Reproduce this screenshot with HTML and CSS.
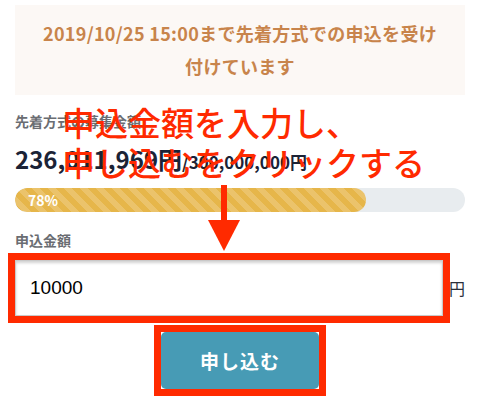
FILE: index.html
```html
<!DOCTYPE html>
<html lang="ja">
<head>
<meta charset="utf-8">
<link rel="stylesheet" href="styles.css">
</head>
<body>
<div class="page">
  <div class="notice">2019/10/25 15:00まで先着方式での申込を受け<br>付けています</div>
  <div class="summary">
    <div class="label">先着方式の募集金額</div>
    <div class="amount"><span class="big">236,011,969円</span><span class="total">/300,000,000円</span></div>
    <div class="bar"><div class="fill" style="width:78%">78%</div></div>
  </div>
  <div class="form">
    <div class="label form-label">申込金額</div>
    <div class="input-row">
      <input class="amount-input" type="text" value="10000">
      <span class="unit">円</span>
    </div>
    <div class="actions"><div class="apply-frame"><button class="apply" type="button">申し込む</button></div></div>
  </div>
  <div class="annot">申込金額を入力し、<br>申し込むをクリックする</div>
  <svg class="arrow" width="38" height="67" viewBox="0 0 38 67">
    <rect x="16" y="0" width="6" height="38" fill="#ff2a00"/>
    <polygon points="3,35 35,35 19,66" fill="#ff2a00"/>
  </svg>
</div>
</body>
</html>
```

FILE: styles.css
```css
html, body {
  margin: 0;
  padding: 0;
  background: #ffffff;
}
body {
  font-family: "Noto Sans CJK JP", "Noto Sans", sans-serif;
}
.page {
  position: relative;
  width: 480px;
  height: 409px;
  box-sizing: border-box;
  padding: 5px 15px 0 15px;
  overflow: hidden;
}
.notice {
  background: #fcf8f5;
  color: #c8844b;
  font-weight: 700;
  font-size: 18px;
  line-height: 33px;
  text-align: center;
  padding: 12px 0;
  letter-spacing: 0.3px;
}
.summary {
  margin-top: 16px;
}
.label {
  font-size: 14px;
  line-height: 20px;
  font-weight: 700;
  color: #6a6d72;
}
.amount {
  margin-top: 12px;
  line-height: 32px;
  color: #1b2336;
  font-weight: 700;
  white-space: nowrap;
}
.big {
  font-size: 24px;
}
.total {
  font-size: 17px;
}
.bar {
  margin-top: 10px;
  height: 24px;
  border-radius: 12px;
  background: #e8ecef;
  overflow: hidden;
}
.fill {
  height: 100%;
  border-radius: 12px;
  background-color: #e6b64a;
  background-image: linear-gradient(45deg, rgba(255,255,255,.18) 25%, transparent 25%, transparent 50%, rgba(255,255,255,.18) 50%, rgba(255,255,255,.18) 75%, transparent 75%, transparent);
  background-size: 16px 16px;
  color: #ffffff;
  font-size: 14px;
  font-weight: 700;
  line-height: 24px;
  padding-left: 13px;
  box-sizing: border-box;
}
.form {
  margin-top: 18px;
}
.form-label {
  margin-bottom: 10px;
}
.input-row {
  display: flex;
  align-items: center;
  gap: 6px;
}
.amount-input {
  flex: 1;
  min-width: 0;
  height: 56px;
  box-sizing: border-box;
  border: 1px solid #c9c9c9;
  border-radius: 0;
  box-shadow: inset 0 2px 3px rgba(0,0,0,0.18);
  padding: 0 14px;
  font-family: "Liberation Sans", Arial, sans-serif;
  font-size: 19px;
  color: #000000;
  outline: 7px solid #ff2a00;
  outline-offset: 0;
  margin: 0;
}
.unit {
  font-size: 16px;
  color: #2a2f3a;
}
.actions {
  display: flex;
  justify-content: center;
  margin-top: 9px;
}
.apply-frame {
  display: flex;
  border: 7px solid #ff2a00;
}
.apply {
  width: 158px;
  height: 57px;
  background: #479bb5;
  border: none;
  border-radius: 5px;
  color: #ffffff;
  font-family: "Noto Sans CJK JP", "Noto Sans", sans-serif;
  font-size: 19px;
  font-weight: 700;
  letter-spacing: 1px;
  margin: 0;
  padding: 0;
}
.annot {
  position: absolute;
  left: 62px;
  top: 102px;
  color: #ff2a00;
  font-size: 33px;
  line-height: 40px;
  font-weight: 500;
  white-space: nowrap;
}
.arrow {
  position: absolute;
  left: 205px;
  top: 185px;
}
```
